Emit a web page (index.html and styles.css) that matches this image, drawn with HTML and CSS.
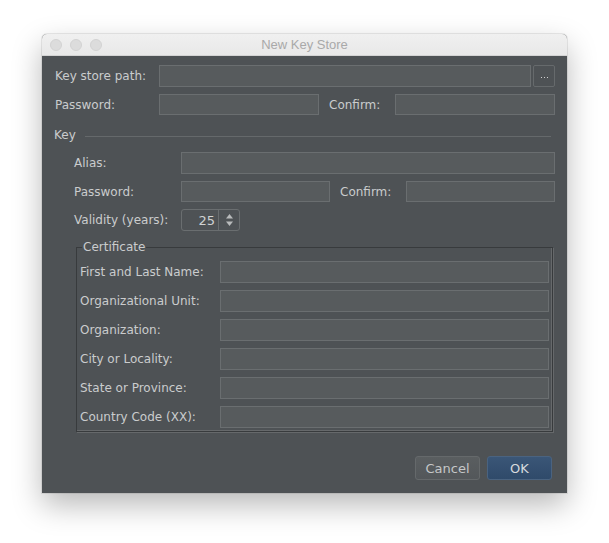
FILE: index.html
```html
<!DOCTYPE html>
<html>
<head>
<meta charset="utf-8">
<link rel="stylesheet" href="styles.css">
</head>
<body>
<div class="stage">
  <div class="window">
    <div class="titlebar">
      <div class="lights"><span></span><span></span><span></span></div>
      <div class="title">New Key Store</div>
    </div>
    <div class="content">
      <div class="row r1">
        <label class="lbl w104">Key store path:</label>
        <div class="field grow"></div>
        <div class="browse"><i></i><i></i><i></i></div>
      </div>
      <div class="row r2">
        <label class="lbl w104">Password:</label>
        <div class="field w160"></div>
        <label class="lbl confirm">Confirm:</label>
        <div class="field grow"></div>
      </div>
      <div class="section">
        <span class="sec-title">Key</span>
        <span class="sec-line"></span>
      </div>
      <div class="keyblock">
        <div class="row">
          <label class="lbl w107">Alias:</label>
          <div class="field grow"></div>
        </div>
        <div class="row r-key2">
          <label class="lbl w107">Password:</label>
          <div class="field w149"></div>
          <label class="lbl confirm">Confirm:</label>
          <div class="field grow"></div>
        </div>
        <div class="row r-key3">
          <label class="lbl w107">Validity (years):</label>
          <div class="spinner">
            <span class="spin-val">25</span>
            <span class="spin-arrows">
              <svg width="9" height="14" viewBox="0 0 9 14"><path d="M4.5 1 L8 5.5 H1 Z" fill="#b9bbbc"/><path d="M4.5 13 L8 8.5 H1 Z" fill="#b9bbbc"/></svg>
            </span>
          </div>
        </div>
        <fieldset class="cert">
          <legend>Certificate</legend>
          <div class="crow"><label class="lbl w140">First and Last Name:</label><div class="field grow"></div></div>
          <div class="crow"><label class="lbl w140">Organizational Unit:</label><div class="field grow"></div></div>
          <div class="crow"><label class="lbl w140">Organization:</label><div class="field grow"></div></div>
          <div class="crow"><label class="lbl w140">City or Locality:</label><div class="field grow"></div></div>
          <div class="crow"><label class="lbl w140">State or Province:</label><div class="field grow"></div></div>
          <div class="crow"><label class="lbl w140">Country Code (XX):</label><div class="field grow"></div></div>
        </fieldset>
      </div>
      <div class="buttons">
        <div class="btn cancel">Cancel</div>
        <div class="btn ok">OK</div>
      </div>
    </div>
  </div>
</div>
</body>
</html>
```

FILE: styles.css
```css
html, body {
  margin: 0;
  padding: 0;
  background: #ffffff;
}
body {
  width: 609px;
  height: 543px;
  overflow: hidden;
  font-family: "DejaVu Sans", "Liberation Sans", sans-serif;
  font-size: 12px;
}
.stage {
  padding: 34px 0 0 42px;
}
.window {
  width: 525px;
  height: 459px;
  border-radius: 5px 5px 0 0;
  background: #4e5255;
  box-shadow: 0 12px 30px rgba(0, 0, 0, 0.28), 0 0 0 1px rgba(0, 0, 0, 0.08);
  overflow: hidden;
  display: flex;
  flex-direction: column;
}
.titlebar {
  height: 22px;
  flex: none;
  background: linear-gradient(#f0f0f0, #e8e8e8);
  border-bottom: 1px solid #d4d4d4;
  box-sizing: border-box;
  position: relative;
  display: flex;
  align-items: center;
  justify-content: center;
}
.lights {
  position: absolute;
  left: 8px;
  top: 5px;
  display: flex;
  gap: 8px;
}
.lights span {
  width: 12px;
  height: 12px;
  box-sizing: border-box;
  border-radius: 50%;
  background: #dcdcdc;
  border: 1px solid #d2d2d2;
}
.title {
  color: #a9a9a9;
  font-family: "Liberation Sans", sans-serif;
  font-size: 13px;
}
.content {
  flex: 1;
  padding: 9px 12px 0 13px;
  color: #cacccd;
  display: flex;
  flex-direction: column;
}
.row {
  display: flex;
  align-items: center;
  height: 22px;
}
.r2 { margin-top: 7px; height: 21px; }
.lbl {
  flex: none;
  white-space: nowrap;
}
.w104 { width: 104px; }
.w107 { width: 107px; }
.w140 { width: 140px; }
.w160 { width: 160px; }
.w149 { width: 149px; }
.confirm {
  width: 66px;
  margin-left: 10px;
}
.field {
  height: 100%;
  box-sizing: border-box;
  background: #575b5d;
  border: 1px solid #6a6e70;
}
.grow { flex: 1; }
.browse {
  width: 22px;
  height: 22px;
  margin-left: 2px;
  box-sizing: border-box;
  border: 1px solid #666a6c;
  border-radius: 2px;
  display: flex;
  align-items: center;
  justify-content: center;
  gap: 2px;
  padding-top: 2px;
}
.browse i {
  width: 1px;
  height: 1px;
  background: #d0d0d0;
}
.section {
  display: flex;
  align-items: center;
  margin-top: 13px;
  height: 14px;
}
.sec-title {
  margin-right: 9px;
  margin-left: -1px;
}
.sec-line {
  flex: 1;
  height: 1px;
  background: #65696b;
  margin-right: 4px;
  margin-top: 2px;
}
.keyblock {
  margin-top: 10px;
  padding-left: 19px;
  display: flex;
  flex-direction: column;
}
.r-key2 { margin-top: 7px; height: 21px; }
.r-key3 { margin-top: 7px; }
.spinner {
  width: 59px;
  height: 22px;
  box-sizing: border-box;
  border: 1px solid #6a6e70;
  border-radius: 3px;
  display: flex;
  align-items: center;
}
.spin-val {
  flex: 1;
  text-align: right;
  padding-right: 3px;
  font-size: 13px;
  color: #d0d2d3;
}
.spin-arrows {
  width: 21px;
  height: 100%;
  border-left: 1px solid #6a6e70;
  box-sizing: border-box;
  display: flex;
  align-items: center;
  justify-content: center;
}
.cert {
  margin: 9px 2px 0 2px;
  padding: 7px 3px 3px 3px;
  border: 1px solid #383b3d;
  box-shadow: inset -1px -1px 0 #66696b, 1px 1px 0 #66696b;
  display: flex;
  flex-direction: column;
  gap: 7px;
}
.cert legend {
  padding: 0 1px;
  margin-left: 2px;
  color: #cacccd;
}
.crow {
  display: flex;
  align-items: center;
  height: 22px;
}
.buttons {
  margin-top: 24px;
  display: flex;
  justify-content: flex-end;
  gap: 7px;
  padding-right: 3px;
}
.btn {
  width: 65px;
  height: 24px;
  box-sizing: border-box;
  border-radius: 3px;
  display: flex;
  align-items: center;
  justify-content: center;
  font-size: 13px;
}
.cancel {
  background: linear-gradient(#5a5e60, #53575a);
  border: 1px solid #65696b;
  color: #c5c7c8;
}
.ok {
  background: linear-gradient(#3a5677, #2f4a6a);
  border: 1px solid #4a6380;
  color: #d7dadd;
}
```
